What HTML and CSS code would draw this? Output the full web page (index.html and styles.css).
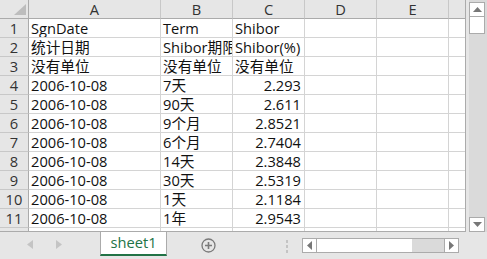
FILE: index.html
```html
<!DOCTYPE html>
<html>
<head>
<meta charset="utf-8">
<link rel="stylesheet" href="styles.css">
</head>
<body>
<div class="app">
  <div class="top">
    <div class="sheet">
      <div class="corner"><svg width="12" height="11" viewBox="0 0 12 11"><polygon points="12,0 12,11 0,11" fill="#bdbdbd"/></svg></div>
      <div class="ch">A</div><div class="ch">B</div><div class="ch">C</div><div class="ch">D</div><div class="ch">E</div><div class="ch"></div>

      <div class="rh">1</div><div class="c">SgnDate</div><div class="c">Term</div><div class="c">Shibor</div><div class="c"></div><div class="c"></div><div class="c"></div>
      <div class="rh">2</div><div class="c">统计日期</div><div class="c">Shibor期限</div><div class="c">Shibor(%)</div><div class="c"></div><div class="c"></div><div class="c"></div>
      <div class="rh">3</div><div class="c">没有单位</div><div class="c">没有单位</div><div class="c">没有单位</div><div class="c"></div><div class="c"></div><div class="c"></div>
      <div class="rh">4</div><div class="c">2006-10-08</div><div class="c">7天</div><div class="c num">2.293</div><div class="c"></div><div class="c"></div><div class="c"></div>
      <div class="rh">5</div><div class="c">2006-10-08</div><div class="c">90天</div><div class="c num">2.611</div><div class="c"></div><div class="c"></div><div class="c"></div>
      <div class="rh">6</div><div class="c">2006-10-08</div><div class="c">9个月</div><div class="c num">2.8521</div><div class="c"></div><div class="c"></div><div class="c"></div>
      <div class="rh">7</div><div class="c">2006-10-08</div><div class="c">6个月</div><div class="c num">2.7404</div><div class="c"></div><div class="c"></div><div class="c"></div>
      <div class="rh">8</div><div class="c">2006-10-08</div><div class="c">14天</div><div class="c num">2.3848</div><div class="c"></div><div class="c"></div><div class="c"></div>
      <div class="rh">9</div><div class="c">2006-10-08</div><div class="c">30天</div><div class="c num">2.5319</div><div class="c"></div><div class="c"></div><div class="c"></div>
      <div class="rh">10</div><div class="c">2006-10-08</div><div class="c">1天</div><div class="c num">2.1184</div><div class="c"></div><div class="c"></div><div class="c"></div>
      <div class="rh">11</div><div class="c">2006-10-08</div><div class="c">1年</div><div class="c num">2.9543</div><div class="c"></div><div class="c"></div><div class="c"></div>
      <div class="rh">12</div><div class="c"></div><div class="c"></div><div class="c"></div><div class="c"></div><div class="c"></div><div class="c"></div>
    </div>
    <div class="vscroll">
      <div class="sbtn up"><svg width="9" height="5" viewBox="0 0 9 5"><polygon points="0,5 9,5 4.5,0" fill="#777"/></svg></div>
      <div class="vthumb"></div>
      <div class="vtrack"></div>
      <div class="sbtn down"><svg width="9" height="5" viewBox="0 0 9 5"><polygon points="0,0 9,0 4.5,5" fill="#777"/></svg></div>
    </div>
  </div>
  <div class="bottom">
    <div class="nav">
      <svg width="6" height="9" viewBox="0 0 6 9"><polygon points="6,0 6,9 0,4.5" fill="#c4c4c4"/></svg>
      <svg width="6" height="9" viewBox="0 0 6 9"><polygon points="0,0 0,9 6,4.5" fill="#c4c4c4"/></svg>
    </div>
    <div class="tab">sheet1</div>
    <div class="add"><svg width="15" height="15" viewBox="0 0 15 15"><circle cx="7.5" cy="7.5" r="6.5" fill="none" stroke="#7a7a7a" stroke-width="1.3"/><path d="M7.5 4v7M4 7.5h7" stroke="#7a7a7a" stroke-width="1.6"/></svg></div>
    <div class="dots"><span></span><span></span><span></span></div>
    <div class="hscroll">
      <div class="sbtn hb"><svg width="5" height="9" viewBox="0 0 5 9"><polygon points="5,0 5,9 0,4.5" fill="#777"/></svg></div>
      <div class="hthumb"></div>
      <div class="htrack"></div>
      <div class="sbtn hb"><svg width="5" height="9" viewBox="0 0 5 9"><polygon points="0,0 0,9 5,4.5" fill="#777"/></svg></div>
    </div>
  </div>
</div>
</body>
</html>
```

FILE: styles.css
```css
* { box-sizing: border-box; }
html, body { margin: 0; padding: 0; }
body {
  background: #e6e6e6;
  font-family: "Open Sans", "Noto Sans CJK SC", sans-serif;
  font-size: 14.67px;
  color: #111;
  width: 487px;
  height: 259px;
  overflow: hidden;
}
.app { width: 487px; height: 259px; }
.top { display: flex; height: 232px; }
.sheet {
  box-sizing: content-box;
  width: 465px;
  height: 231px;
  border-right: 1px solid #ababab;
  border-bottom: 1px solid #ababab;
  overflow: hidden;
  display: grid;
  grid-template-columns: 29px 132px 72px 72px 72px 72px 72px;
  grid-template-rows: 19px;
  grid-auto-rows: 19px;
  background: #fff;
}
.corner {
  background: #e6e6e6;
  border-right: 1px solid #ababab;
  border-bottom: 1px solid #ababab;
  display: flex;
  align-items: flex-end;
  justify-content: flex-end;
  padding: 0 2px 3px 0;
}
.ch {
  background: #e6e6e6;
  border-right: 1px solid #c8c8c8;
  border-bottom: 1px solid #ababab;
  text-align: center;
  line-height: 18px;
  color: #333;
}
.rh {
  background: #e6e6e6;
  border-right: 1px solid #ababab;
  border-bottom: 1px solid #c8c8c8;
  text-align: center;
  line-height: 18px;
  color: #333;
}
.c {
  border-right: 1px solid #d4d4d4;
  border-bottom: 1px solid #d4d4d4;
  line-height: 18px;
  padding-left: 2px;
  white-space: nowrap;
  overflow: hidden;
}
.c.num { text-align: right; padding-right: 3px; padding-left: 0; }

.vscroll {
  margin-left: 3px;
  width: 18px;
  height: 232px;
  background: #dadada;
  display: flex;
  flex-direction: column;
  padding-top: 2px;
}
.sbtn {
  background: #fff;
  border: 1px solid #ababab;
  display: flex;
  align-items: center;
  justify-content: center;
  flex: none;
}
.up, .down { width: 16px; height: 15px; }
.vthumb { width: 16px; height: 17px; background: #fff; border: 1px solid #ababab; border-top: none; }
.vtrack { flex: 1; }

.bottom { display: flex; height: 27px; align-items: flex-start; }
.nav {
  width: 100px;
  height: 24px;
  display: flex;
  align-items: center;
  padding-left: 27px;
  gap: 23px;
}
.tab {
  width: 67px;
  height: 24px;
  background: #fff;
  border-left: 1px solid #ababab;
  border-right: 1px solid #ababab;
  border-bottom: 2px solid #217346;
  color: #217346;
  text-align: center;
  line-height: 21px;
}
.add { margin-left: 34px; margin-top: 6px; width: 15px; height: 15px; display: flex; }
.dots {
  margin-left: 70px;
  margin-top: 8px;
  display: flex;
  flex-direction: column;
  gap: 2px;
}
.dots span { width: 2px; height: 3px; background: #c4c4c4; display: block; }
.hscroll {
  margin-left: 14px;
  margin-top: 6px;
  width: 157px;
  height: 15px;
  display: flex;
}
.hb { width: 15px; height: 15px; }
.hthumb { width: 95px; height: 15px; background: #fff; border-top: 1px solid #ababab; border-bottom: 1px solid #ababab; }
.htrack { flex: 1; background: #dadada; border-top: 1px solid #ababab; border-bottom: 1px solid #ababab; }
```
